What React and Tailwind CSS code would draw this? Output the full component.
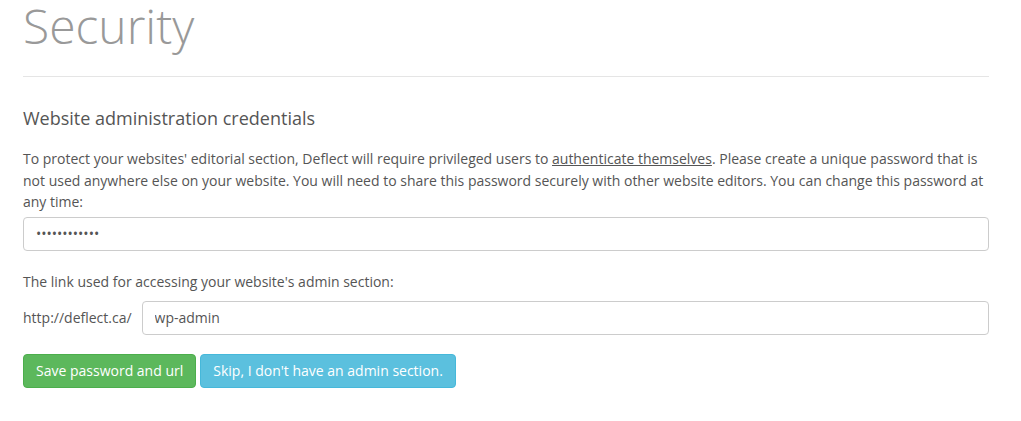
export default function App() {
  return (
    <div className="min-h-screen bg-white font-['Open_Sans',sans-serif] text-[14px] text-[#555]">
      <div className="px-[23px] pr-[32px]">
        {/* Header */}
        <h1 className="text-[48px] font-light leading-[52px] text-[#999]">Security</h1>
        <hr className="mt-[24px] border-t border-[#e5e5e5]" />

        {/* Credentials */}
        <h2 className="mt-[29px] text-[18px] leading-[24px] text-[#555]">Website administration credentials</h2>
        <p className="mt-[18px] leading-[21.5px]">
          To protect your websites' editorial section, Deflect will require privileged users to{' '}
          <a href="#" className="underline">authenticate themselves</a>. Please create a unique password that is
          not used anywhere else on your website. You will need to share this password securely with other website
          editors. You can change this password at any time:
        </p>
        <input
          type="password"
          defaultValue="mypassword12"
          className="mt-[4px] block w-full h-[34px] rounded-[4px] border border-[#ccc] px-[12px] text-[#555] outline-none"
        />

        {/* Admin url */}
        <p className="mt-[20px] leading-[21px]">The link used for accessing your website's admin section:</p>
        <div className="mt-[9px] flex items-center gap-[10px]">
          <span className="whitespace-nowrap">http://deflect.ca/</span>
          <input
            type="text"
            defaultValue="wp-admin"
            className="flex-1 h-[34px] rounded-[4px] border border-[#ccc] px-[12px] text-[#555] outline-none"
          />
        </div>

        {/* Actions */}
        <div className="mt-[19px] flex gap-[4px]">
          <button className="h-[34px] px-[12px] rounded-[4px] bg-[#5cb85c] border border-[#4cae4c] text-white">
            Save password and url
          </button>
          <button className="h-[34px] px-[12px] rounded-[4px] bg-[#5bc0de] border border-[#46b8da] text-white">
            Skip, I don't have an admin section.
          </button>
        </div>
      </div>
    </div>
  )
}
